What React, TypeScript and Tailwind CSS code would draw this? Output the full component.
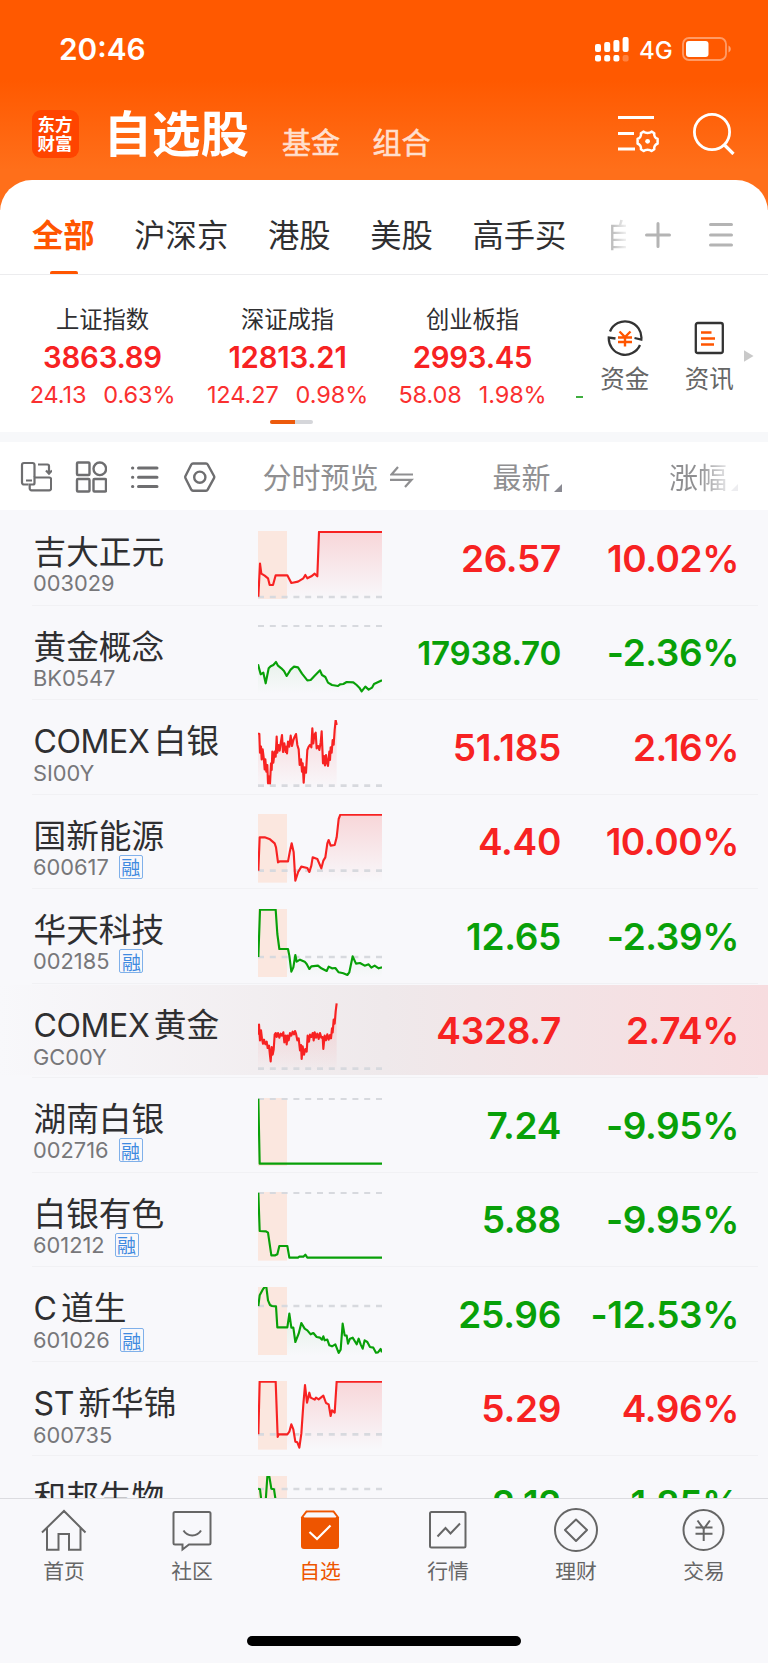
import type { ReactNode } from 'react';

type Trend = 'up' | 'down';

interface Stock {
  prefix?: string;
  name: string;
  code: string;
  margin?: boolean;
  price: string;
  change: string;
  trend: Trend;
  // sparkline, drawn in a 372 x 206 box
  base: number;
  auction?: boolean;
  points: string;
  active?: boolean;
  smallPrice?: boolean;
}

const STOCKS: Stock[] = [
  {
    name: '吉大正元', code: '003029', price: '26.57', change: '10.02%', trend: 'up', base: 198, auction: true,
    points: '1,197 6,98 10,128 20,134 30,142 35,162 45,162 53,133 88,133 100,156 120,152 136,142 142,132 148,142 160,136 170,128 178,136 183,3 372,3',
  },
  {
    name: '黄金概念', code: 'BK0547', price: '17938.70', change: '-2.36%', trend: 'down', base: 2, smallPrice: true,
    points: '0,118 8,148 16,143 23,175 32,130 38,124 46,120 54,111 60,122 70,130 78,138 86,153 98,134 108,125 120,127 132,146 148,166 158,165 170,152 186,136 192,150 202,156 210,173 222,180 240,183 246,178 256,177 266,171 286,172 296,180 304,188 311,199 322,185 332,194 342,188 348,177 372,166',
  },
  {
    prefix: 'COMEX', name: '白银', code: 'SI00Y', price: '51.185', change: '2.16%', trend: 'up', base: 197,
    points: '0,40 4,42 6,98 9,80 11,118 14,88 17,112 20,148 22,118 25,155 28,135 30,190 33,170 36,190 39,130 41,150 43,95 46,128 50,95 53,110 56,50 58,98 62,75 65,92 68,70 72,45 75,96 79,70 83,96 86,80 87,100 90,65 94,80 98,47 102,78 106,60 110,50 114,42 118,75 122,88 125,135 129,118 132,155 134,130 137,188 140,142 144,158 148,90 152,80 156,75 160,82 163,25 166,70 169,45 173,38 176,85 180,78 184,90 188,68 191,34 195,130 198,108 201,136 204,105 207,128 210,138 214,95 216,120 218,82 221,98 224,60 227,74 230,30 233,0 236,15',
  },
  {
    name: '国新能源', code: '600617', margin: true, price: '4.40', change: '10.00%', trend: 'up', base: 170, auction: true,
    points: '1,170 5,70 20,70 36,76 50,88 54,100 60,145 66,142 90,142 96,110 101,88 107,115 112,200 120,175 130,158 148,162 154,174 160,155 164,130 178,135 190,163 196,140 202,130 208,88 212,78 218,95 230,93 236,70 242,15 247,2 372,2',
  },
  {
    name: '华天科技', code: '002185', margin: true, price: '12.65', change: '-2.39%', trend: 'down', base: 144, auction: true,
    points: '1,144 6,2 53,2 58,75 64,120 90,120 94,140 100,188 106,175 112,138 116,158 126,152 140,158 146,165 154,180 160,172 180,170 190,178 206,186 212,173 222,178 232,177 242,190 256,193 268,198 274,190 284,142 294,164 306,162 320,170 332,166 340,176 350,170 362,178 372,175',
  },
  {
    prefix: 'COMEX', name: '黄金', code: 'GC00Y', price: '4328.7', change: '2.74%', trend: 'up', base: 197, active: true,
    points: '0,95 3,65 6,112 9,82 12,108 15,122 18,110 22,124 26,116 29,135 33,128 36,158 38,175 41,132 44,155 47,140 50,95 53,90 56,102 60,90 64,104 68,92 72,98 76,88 79,118 83,98 86,124 89,98 92,112 96,90 100,98 104,86 108,94 111,84 114,92 118,112 122,106 126,142 129,126 131,168 134,130 138,155 142,138 146,146 149,98 153,116 156,95 160,102 164,90 167,112 170,88 174,104 178,92 182,108 186,90 190,104 194,102 196,138 200,98 204,112 208,94 212,110 216,96 219,106 222,76 224,88 227,50 230,62 233,25 236,1',
  },
  {
    name: '湖南白银', code: '002716', margin: true, price: '7.24', change: '-9.95%', trend: 'down', base: 2, auction: true,
    points: '1,2 5,197 372,197',
  },
  {
    name: '白银有色', code: '601212', margin: true, price: '5.88', change: '-9.95%', trend: 'down', base: 2, auction: true,
    points: '1,2 5,117 24,118 30,122 40,190 52,190 58,187 64,162 88,162 94,197 120,197 124,194 136,194 142,188 148,197 372,197',
  },
  {
    prefix: 'C', name: '道生', code: '601026', margin: true, price: '25.96', change: '-12.53%', trend: 'down', base: 57, auction: true,
    points: '1,57 5,25 14,8 20,0 25,0 30,40 36,54 42,57 54,58 58,121 88,121 94,80 100,122 106,122 112,165 122,140 130,108 140,125 148,130 158,142 166,138 176,150 186,152 192,158 196,148 200,160 208,158 214,175 222,178 232,172 242,198 248,188 254,110 260,145 266,146 270,170 276,155 284,152 296,172 302,155 308,172 314,185 320,160 328,165 336,180 346,182 354,197 360,196 368,186 372,196',
  },
  {
    prefix: 'ST', name: '新华锦', code: '600735', price: '5.29', change: '4.96%', trend: 'up', base: 160, auction: true,
    points: '1,160 5,2 53,2 59,168 62,160 88,160 94,152 100,130 106,145 112,182 118,184 124,200 130,158 136,70 141,12 147,65 154,35 158,50 170,56 174,50 182,55 196,44 204,66 212,70 218,105 222,88 230,95 236,2 372,2',
  },
  {
    name: '和邦生物', code: '603077', margin: true, price: '2.12', change: '-1.85%', trend: 'down', base: 39, auction: true,
    points: '0,38 6,40 12,90 22,90 28,2 34,2 40,38 48,40 54,80 60,130 90,130 110,150 372,150',
  },
];

const INDICES = [
  { name: '上证指数', value: '3863.89', diff: '24.13', pct: '0.63%' },
  { name: '深证成指', value: '12813.21', diff: '124.27', pct: '0.98%' },
  { name: '创业板指', value: '2993.45', diff: '58.08', pct: '1.98%' },
];

const CJK = "font-['Noto_Sans_CJK_SC',sans-serif]";

function Sparkline({ stock, id }: { stock: Stock; id: string }) {
  const color = stock.trend === 'up' ? '#f72222' : '#08a008';
  const lastX = stock.points.split(' ').pop()!.split(',')[0];
  return (
    <svg viewBox="0 0 372 206" className="h-[68.67px] w-[124px] shrink-0">
      <defs>
        <linearGradient id={id} x1="0" y1="0" x2="0" y2="206" gradientUnits="userSpaceOnUse">
          <stop offset="0" stopColor={color} stopOpacity={stock.trend === 'up' ? 0.16 : 0.14} />
          <stop offset="1" stopColor={color} stopOpacity="0" />
        </linearGradient>
      </defs>
      <polygon points={`0,206 ${stock.points} ${lastX},206`} fill={`url(#${id})`} />
      {stock.auction && <rect width="87" height="206" fill="#fbe7df" />}
      <path d={`M0 ${stock.base}H372`} stroke="#d7d9de" strokeWidth="8" strokeDasharray="18 17.4" />
      <polyline points={stock.points} fill="none" stroke={color} strokeWidth="6.4" strokeLinejoin="round" />
    </svg>
  );
}

function StockRow({ stock, index }: { stock: Stock; index: number }) {
  const color = stock.trend === 'up' ? 'text-[#f72222]' : 'text-[#08a008]';
  return (
    <div className="relative h-[94.5px] shrink-0 pl-[32px] pr-[10px]">
      {stock.active && (
        <div className="absolute inset-x-0 bottom-[3px] top-[1.5px] bg-gradient-to-r from-[#f8f8fb] via-[#efe9eb] to-[#f7dcdf]" />
      )}
      <div className="relative flex h-full border-b border-[#f1f1f4]">
        <div className="w-[226px] pt-[22px]">
          <div className="whitespace-nowrap pl-[1.5px] font-[Inter,'Noto_Sans_CJK_SC',sans-serif] text-[32.7px] leading-[38px] text-[#2f2f31]">
            {stock.prefix && <span className="mr-[4.5px] text-[32px] tracking-[-0.4px]">{stock.prefix}</span>}
            {stock.name}
          </div>
          <div className="flex h-6 items-center gap-[10px]">
            <span className="pl-[1px] font-[Inter,sans-serif] text-[21.8px] leading-6 text-[#77777a]">{stock.code}</span>
            {stock.margin && (
              <span className={`flex h-6 w-6 items-center justify-center rounded-[2px] border border-[#7fb0ea] text-[19px] leading-none text-[#3f8ae0] ${CJK}`}>
                融
              </span>
            )}
          </div>
        </div>
        <div className="pt-[19.5px]">
          <Sparkline stock={stock} id={`area-${index}`} />
        </div>
        <div className={`flex w-[179px] items-center justify-end pt-[1.5px] font-[Inter,sans-serif] font-semibold tracking-[-0.3px] ${stock.smallPrice ? 'pt-[3px] text-[33.2px]' : 'text-[37px]'} ${color}`}>
          {stock.price}
        </div>
        <div className={`flex flex-1 items-center justify-end whitespace-nowrap pr-[19px] pt-[1.5px] font-[Inter,sans-serif] text-[37px] font-semibold tracking-[-0.4px] ${color}`}>
          {stock.change}
        </div>
      </div>
    </div>
  );
}

function StatusBar() {
  return (
    <div className="flex h-[98px] items-center pl-[59px] pr-[36px]">
      <span className="pt-[1px] font-[Inter,sans-serif] text-[29.8px] font-semibold">20:46</span>
      <svg className="ml-auto" width="34" height="25" viewBox="0 0 34 25" fill="#fff">
        <rect x="0" y="7" width="6" height="8" rx="2" />
        <rect x="9.2" y="5" width="6" height="10" rx="2" />
        <rect x="18.4" y="3" width="6" height="12" rx="2" />
        <rect x="27.6" y="0" width="6" height="15" rx="2" />
        <rect x="0" y="18" width="6" height="6.5" rx="2" />
        <rect x="9.2" y="18" width="6" height="6.5" rx="2" />
        <rect x="18.4" y="18" width="6" height="6.5" rx="2" />
        <rect x="27.6" y="18" width="6" height="6.5" rx="2" opacity=".25" />
      </svg>
      <span className="ml-[10px] w-[43px] pt-[3px] font-[Inter,sans-serif] text-[24px] font-medium">4G</span>
      <svg width="50" height="25" viewBox="0 0 50 25">
        <rect x="1" y="1" width="43" height="22" rx="6" fill="none" stroke="#fff" strokeOpacity=".4" strokeWidth="1.8" />
        <rect x="4" y="4" width="22.5" height="16" rx="3" fill="#fff" />
        <path d="M46.5 8.5c3 1.4 3 5.6 0 7z" fill="#fff" opacity=".45" />
      </svg>
    </div>
  );
}

function Header() {
  return (
    <header className="h-[210px] bg-[linear-gradient(#ff5900_0,#ff5900_80px,#ff6f1a_170px)] text-white">
      <StatusBar />
      <div className={`flex h-[72px] items-center pl-[32px] pr-[33px] ${CJK}`}>
        <div className="flex h-12 w-[47px] items-center justify-center rounded-[9px] bg-[#ff4400] pb-[2px]">
          <span className="w-[36px] break-all text-[17.5px] font-bold leading-[19.5px]">东方财富</span>
        </div>
        <h1 className="ml-[24.5px] pb-[6px] text-[48.5px] font-bold leading-[56px]">自选股</h1>
        <span className="ml-[33px] pt-[14px] text-[29px] leading-8 text-[#ffdfce] [-webkit-text-stroke:0.6px_#ffdfce]">基金</span>
        <span className="ml-[32.5px] pt-[14px] text-[29px] leading-8 text-[#ffdfce] [-webkit-text-stroke:0.6px_#ffdfce]">组合</span>
        <svg className="ml-auto" width="42" height="42" viewBox="0 0 42 42" fill="none" stroke="#fff" strokeWidth="2.8">
          <path d="M0 4.5h36M0 20.5h16M0 36h17" />
          <path
            d="M25.6 18.6C27.5 20.4 31.7 20.4 33.6 18.6L36.3 20.3C35.6 22.8 37.5 25.4 39.6 25.8V30.8C37.5 31.2 35.6 33.8 36.3 36.3L33.6 38C31.7 36.2 27.5 36.2 25.6 38L22.9 36.3C23.6 33.8 21.7 31.2 19.6 30.8V25.8C21.7 25.4 23.6 22.8 22.9 20.3Z"
            strokeWidth="2.5"
            strokeLinejoin="round"
          />
          <circle cx="29.6" cy="28.3" r="2.4" fill="#fff" stroke="none" />
        </svg>
        <svg className="ml-[33px]" width="42" height="42" viewBox="0 0 42 42" fill="none" stroke="#fff" strokeWidth="2.8">
          <circle cx="19" cy="19" r="17.6" />
          <path d="M31 31.5l9.500 9.500" strokeWidth="3.2" />
        </svg>
      </div>
    </header>
  );
}

function GroupTabs() {
  return (
    <div className={`flex h-[95px] border-b border-[#ececee] pl-[32px] text-[31.3px] leading-[40px] text-[#2f2f31] ${CJK}`}>
      <div className="flex w-[594px] gap-[39.7px] overflow-hidden whitespace-nowrap">
        <div className="relative h-[95px] pt-[34px] font-bold text-[#ff5500]">
          全部
          <span className="absolute bottom-0 left-[17.5px] h-1 w-[28px] rounded-full bg-[#ff5500]" />
        </div>
        <div className="pt-[34px]">沪深京</div>
        <div className="pt-[34px]">港股</div>
        <div className="pt-[34px]">美股</div>
        <div className="pt-[34px]">高手买</div>
        <div className="bg-[linear-gradient(90deg,#a8a8a8,#f0f0f0_20px)] bg-clip-text pt-[34px] text-transparent">自选</div>
      </div>
      <svg className="ml-[19px] mt-[42px]" width="26" height="26" viewBox="0 0 26 26" stroke="#b4b4b4" strokeWidth="3" strokeLinecap="round">
        <path d="M1.5 13h23M13 1.5v23" />
      </svg>
      <svg className="ml-[38px] mt-[42px]" width="24" height="26" viewBox="0 0 24 26" stroke="#b4b4b4" strokeWidth="3" strokeLinecap="round">
        <path d="M1.5 2.5h21M1.5 13h21M1.5 23h21" />
      </svg>
    </div>
  );
}

function Shortcut({ label, children }: { label: string; children: ReactNode }) {
  return (
    <div className="flex w-[84.5px] flex-col items-center">
      {children}
      <span className={`mt-[6px] text-[24.5px] leading-8 text-[#666] ${CJK}`}>{label}</span>
    </div>
  );
}

function IndexStrip() {
  return (
    <div className="relative flex h-[157px] pl-[10px]">
      {INDICES.map((item) => (
        <div key={item.name} className="flex w-[185px] shrink-0 flex-col items-center pt-[27px]">
          <span className={`text-[23.3px] leading-8 text-[#2f2f31] ${CJK}`}>{item.name}</span>
          <span className="mt-[7px] font-[Inter,sans-serif] text-[29.3px] font-semibold leading-[34px] tracking-[-0.2px] text-[#f72222]">
            {item.value}
          </span>
          <span className="mt-[6.5px] flex gap-[17px] font-[Inter,sans-serif] text-[23.5px] leading-7 tracking-[-0.1px] text-[#fa3030]">
            <span>{item.diff}</span>
            <span>{item.pct}</span>
          </span>
        </div>
      ))}
      <div className="mt-[121px] h-[2.5px] w-[7px] shrink-0 translate-x-[11px] bg-[#3fae3f]" />
      <div className="ml-[10.5px] flex pt-[45px]">
        <Shortcut label="资金">
          <svg width="36" height="36" viewBox="0 0 36 36" fill="none" stroke="#333" strokeWidth="2.3">
            <path d="M3 11.5A16.300 16.300 0 0 1 34.300 19.500L27.500 18M33 25A16.300 16.300 0 0 1 1.800 17.500L8.500 18.500" />
            <path d="M12.5 11.5l5.500 5.500 5.500-5.500M11 17.500h14M11 22h14M18 17v9.500" stroke="#ff5500" strokeWidth="2.4" />
          </svg>
        </Shortcut>
        <Shortcut label="资讯">
          <svg width="36" height="36" viewBox="0 0 36 36" fill="none" stroke="#333" strokeWidth="2.3">
            <rect x="4.8" y="3" width="27" height="30" rx="2" />
            <path d="M10 12.5h10.500M10 18.500h14M10 24.500h13" stroke="#ff5500" strokeWidth="2.6" />
          </svg>
        </Shortcut>
      </div>
      <svg className="absolute right-[14.5px] top-[75px]" width="9.5" height="12" viewBox="0 0 10 12" fill="#c9c9c9">
        <path d="M0 0l10 6-10 6z" />
      </svg>
      <div className="absolute left-[270px] top-[145px] flex h-1 w-[43px] overflow-hidden rounded-full bg-[#d5d6da]">
        <span className="w-[25px] bg-[#ec5a0c]" />
      </div>
    </div>
  );
}

function ColumnHeader() {
  return (
    <div className={`flex h-[68px] items-center bg-white pl-[20px] pt-[1px] text-[29px] leading-[34px] text-[#8f8f91] ${CJK}`}>
      <div className="flex w-[242.5px] gap-[22.5px]">
        <svg width="32" height="32" viewBox="0 0 32 32" fill="none" stroke="#6e6e70" strokeWidth="2.2">
          <path d="M8.5 23.5H4a2 2 0 0 1-2-2V4a2 2 0 0 1 2-2h8.500a2 2 0 0 1 2 2v12M6 19.500h6M18 3.500h9.500a1.500 1.500 0 0 1 1.500 1.500V12M26 9.500l3 3.200 3-3.200" />
          <path d="M14.500 16.500H29.300a1.800 1.800 0 0 1 1.800 1.800V27.500a1.800 1.800 0 0 1-1.800 1.800H11.500A1.800 1.800 0 0 1 9.700 27.500V23.500H13a1.500 1.500 0 0 0 1.500-1.500z" />
        </svg>
        <svg width="32" height="32" viewBox="0 0 32 32" fill="none" stroke="#6e6e70" strokeWidth="2.4">
          <rect x="2" y="1.5" width="12.5" height="12.5" rx="1" />
          <circle cx="24.8" cy="7.8" r="6.3" />
          <rect x="2" y="18" width="12.5" height="12.5" rx="1" />
          <rect x="18.5" y="18" width="12.5" height="12.5" rx="1" />
        </svg>
        <svg width="32" height="32" viewBox="0 0 32 32" stroke="#6e6e70" strokeWidth="3" strokeLinecap="round">
          <path d="M9.5 7H28M9.500 16.300H28M9.500 25.500H28M3.500 7h.3M3.500 16.300h.3M3.500 25.500h.3" />
        </svg>
        <svg width="32" height="32" viewBox="0 0 32 32" fill="none" stroke="#6e6e70" strokeWidth="2.4" strokeLinejoin="round">
          <path d="M9 2.5h13a2 2 0 0 1 1.700 1l6.300 11.500a2.500 2.500 0 0 1 0 2.200l-6.300 11.500a2 2 0 0 1-1.700 1H9a2 2 0 0 1-1.700-1L1.500 17.200a2.500 2.500 0 0 1 0-2.200L7.300 3.500a2 2 0 0 1 1.700-1z" />
          <circle cx="15.8" cy="16.2" r="5.6" />
        </svg>
      </div>
      <span className="pb-[2px]">分时预览</span>
      <svg className="ml-[11px]" width="24" height="24" viewBox="0 0 24 24" fill="none" stroke="#8f8f91" strokeWidth="2.2">
        <path d="M8 2l-6.500 7.500H23M0 14.800h21.500L15 22" />
      </svg>
      <span className="ml-[79px] pb-[2px]">最新</span>
      <svg className="ml-[3px] mt-[22px]" width="8" height="8" viewBox="0 0 8 8" fill="#8a8a92">
        <path d="M8 0v8H0z" />
      </svg>
      <span className="ml-[107.5px] bg-gradient-to-r from-[#8f8f91] from-50% to-[#e4e4e6] bg-clip-text pb-[2px] text-transparent">涨幅</span>
      <svg className="ml-[4px] mt-[22px]" width="7" height="7" viewBox="0 0 8 8" fill="#ededf0">
        <path d="M8 0v8H0z" />
      </svg>
    </div>
  );
}

function NavItem({ label, active, children }: { label: string; active?: boolean; children: ReactNode }) {
  return (
    <div className={`flex flex-1 flex-col items-center pt-[9px] ${active ? 'text-[#ee5500]' : 'text-[#666]'}`}>
      <svg width="46" height="46" viewBox="0 0 46 46" fill="none" stroke="currentColor" strokeWidth="2">
        {children}
      </svg>
      <span className={`mt-[1.5px] text-[20.8px] leading-7 ${CJK}`}>{label}</span>
    </div>
  );
}

function BottomNav() {
  return (
    <nav className="h-[165px] border-t border-[#dcdce0] bg-[#f8f8fb]">
      <div className="flex h-[137px]">
        <NavItem label="首页">
          <path d="M1 24.5L23 3l21.500 21.500M6 20v21.800h11.500V26H28v15.800h11.500V20" />
        </NavItem>
        <NavItem label="社区">
          <path d="M6 4h34a1.500 1.500 0 0 1 1.500 1.500v29.500A1.500 1.500 0 0 1 40 36.500H20l-6.500 5v-5H6A1.500 1.500 0 0 1 4.500 35V5.500A1.500 1.500 0 0 1 6 4z" />
          <path d="M14.5 22.5c4 6.600 13.500 6.600 17.500 0" />
        </NavItem>
        <NavItem label="自选" active>
          <path d="M4.5 10l5-6.500h27l5 6.500" />
          <path d="M4 9h38v29a3 3 0 0 1-3 3H7a3 3 0 0 1-3-3z" fill="currentColor" stroke="none" />
          <path d="M7 9.5l3.800-4.700h24.400L39 9.500z" fill="#f8f8fb" stroke="none" />
          <path d="M12.5 24l7.500 7 13.500-13.500" stroke="#fff" strokeWidth="2.2" />
        </NavItem>
        <NavItem label="行情">
          <rect x="5" y="4" width="35.5" height="35.5" rx="1.5" />
          <path d="M12.5 28.5l8-8.500 5 5.500L35 15.500" />
        </NavItem>
        <NavItem label="理财">
          <circle cx="23" cy="22" r="21" />
          <path d="M23 11.500L34 22 23 33 12 22z" strokeLinejoin="round" />
        </NavItem>
        <NavItem label="交易">
          <circle cx="22.5" cy="22" r="20" />
          <path d="M16.5 12.5l6.200 8.500 6.200-8.500M14.500 19.500h17M14.500 25.800h17M22.700 20.500v12.500" />
        </NavItem>
      </div>
      <div className="mx-auto h-[10px] w-[274px] rounded-full bg-black" />
    </nav>
  );
}

export default function App() {
  return (
    <div className="flex h-[1663px] w-[768px] flex-col overflow-hidden bg-[#f7f8fa]">
      <Header />
      <section className="relative -mt-[30.5px] h-[252.5px] shrink-0 rounded-t-[32px] bg-white">
        <GroupTabs />
        <IndexStrip />
      </section>
      <div className="mt-[10px] shrink-0">
        <ColumnHeader />
      </div>
      <main className="flex h-[988px] shrink-0 flex-col overflow-hidden bg-[#f8f8fb] pt-[1px]">
        {STOCKS.map((stock, i) => (
          <StockRow key={stock.code} stock={stock} index={i} />
        ))}
      </main>
      <BottomNav />
    </div>
  );
}
